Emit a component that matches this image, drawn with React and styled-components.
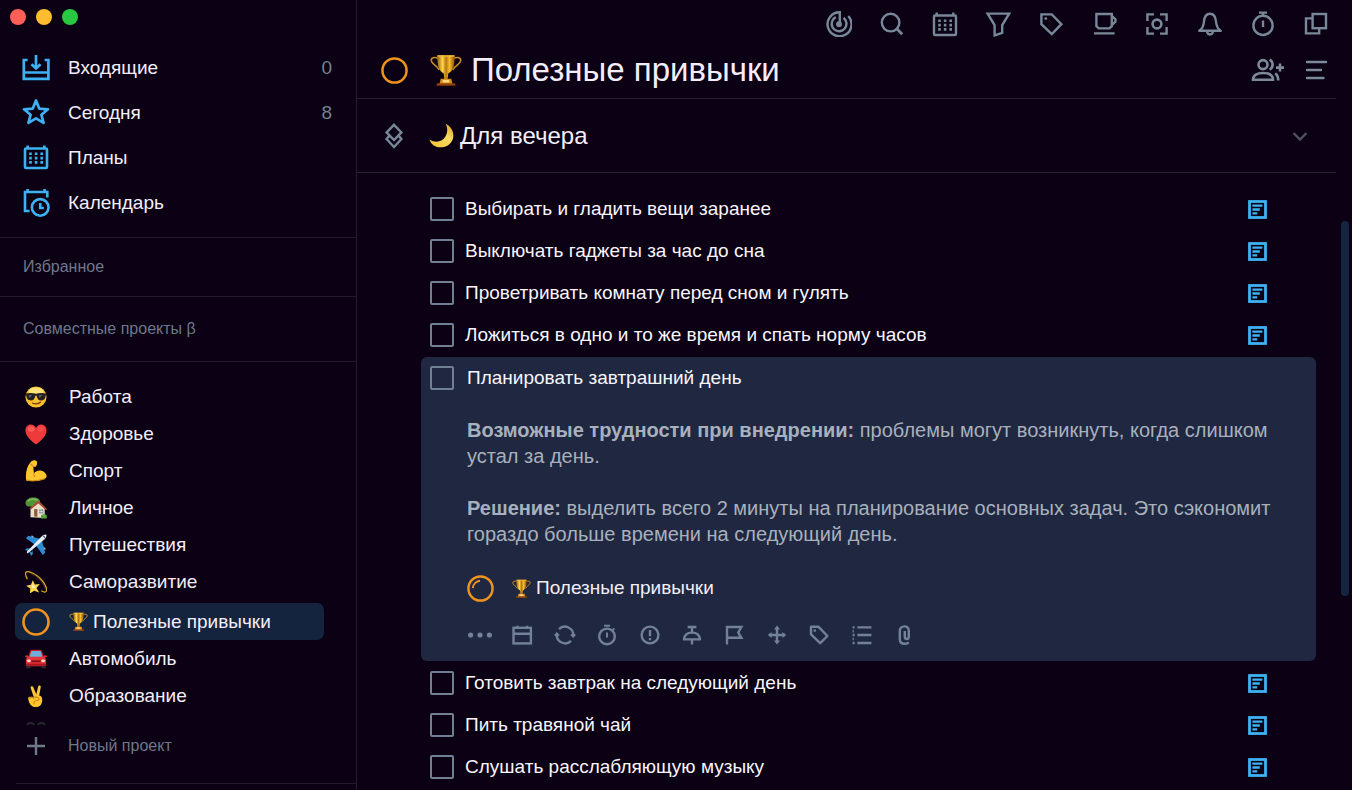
import React, { useState } from "react";
import styled, { createGlobalStyle } from "styled-components";

const GlobalStyle = createGlobalStyle`
  * {
    box-sizing: border-box;
  }

  body {
    margin: 0;
    background: #0b0014;
    color: #f3eefa;
    font-family: "Liberation Sans", Arial, sans-serif;
    font-size: 19px;
  }

  button {
    font: inherit;
    color: inherit;
    background: none;
    border: none;
    padding: 0;
    cursor: pointer;
  }

  svg {
    display: block;
    flex: none;
  }
`;

const Window = styled.div`
  display: flex;
  height: 100vh;
  overflow: hidden;
`;

const Sidebar = styled.aside`
  display: flex;
  flex-direction: column;
  flex: none;
  width: 357px;
  border-right: 1px solid #261d33;
`;

const WindowControls = styled.div`
  display: flex;
  gap: 10px;
  height: 45px;
  padding: 9px 10px;
`;

const Dot = styled.button`
  width: 16px;
  height: 16px;
  border-radius: 50%;
  && {
    background: ${({ color }) => color};
  }
`;

const Nav = styled.nav`
  padding-bottom: 12px;
  border-bottom: 1px solid #221a2d;
`;

const NavLink = styled.a`
  display: flex;
  align-items: center;
  gap: 18px;
  height: 45px;
  padding: 0 24px 0 22px;
  color: #f3eefa;
  text-decoration: none;

  svg {
    color: #3db2f2;
  }
`;

const Count = styled.span`
  margin-left: auto;
  color: #75808f;
`;

const SectionLabel = styled.h2`
  display: flex;
  align-items: center;
  height: ${({ $tall }) => ($tall ? "65px" : "59px")};
  margin: 0;
  padding-left: 23px;
  border-bottom: 1px solid #221a2d;
  color: #6f7889;
  font-size: 16px;
  font-weight: 400;
`;

const Projects = styled.nav`
  flex: 1;
  min-height: 0;
  overflow: hidden;
  padding-top: 16px;
`;

const ProjectLink = styled.a`
  display: flex;
  align-items: center;
  gap: 12px;
  height: 37px;
  margin: ${({ $selected }) => ($selected ? "3px" : "0")} 32px 0 15px;
  border-radius: 7px;
  background: ${({ $selected }) => ($selected ? "#14243f" : "transparent")};
  color: #f3eefa;
  text-decoration: none;
`;

const ProjectIcon = styled.span`
  display: flex;
  justify-content: center;
  width: 42px;
`;

const ProjectName = styled.span`
  display: flex;
  align-items: center;
  gap: 5px;
`;

const SidebarFooter = styled.div`
  flex: none;
  height: 64px;
`;

const NewProject = styled.button`
  display: flex;
  align-items: center;
  gap: 20px;
  width: 100%;
  height: 40px;
  && {
    padding-left: 24px;
    color: #6f7889;
    font-size: 16px;
  }
`;

const FooterLine = styled.hr`
  margin: 17px 0 0 16px;
  border: none;
  border-top: 1px solid #221a2d;
`;

const Main = styled.main`
  flex: 1;
  min-width: 0;
`;

const Toolbar = styled.div`
  display: flex;
  align-items: center;
  justify-content: flex-end;
  gap: 27px;
  height: 48px;
  padding-right: 7px;
  color: #788898;
`;

const Header = styled.header`
  display: flex;
  align-items: center;
  height: 51px;
  padding: 0 7px 6px 24px;
  border-bottom: 1px solid #2a2136;
`;

const Title = styled.h1`
  display: flex;
  align-items: center;
  gap: 9px;
  margin: 0 0 0 22px;
  font-size: 33px;
  line-height: 40px;
  font-weight: 400;
  white-space: nowrap;
`;

const HeaderActions = styled.div`
  display: flex;
  align-items: center;
  gap: 18px;
  margin-left: auto;
  color: #7c8a9a;
`;

const GroupHeader = styled.div`
  display: flex;
  align-items: center;
  height: 74px;
  padding: 0 24px 0 24px;
  border-bottom: 1px solid #2a2136;
  color: #788898;
`;

const GroupTitle = styled.h2`
  display: flex;
  align-items: center;
  gap: 6px;
  flex: 1;
  margin: 0 0 0 22px;
  color: #f3eefa;
  font-size: 24px;
  font-weight: 400;
`;

const TaskList = styled.ul`
  list-style: none;
  margin: 0;
  padding: 15px 20px 0 64px;
`;

const TaskItem = styled.li`
  display: flex;
  align-items: center;
  justify-content: space-between;
  height: 42px;
  padding: 0 49px 0 9px;
  color: #3db2f2;
`;

const TaskLabel = styled.label`
  display: flex;
  align-items: center;
  gap: ${({ $open }) => ($open ? "13px" : "11px")};
  height: 42px;
  color: #f8f5fc;
`;

const Checkbox = styled.input`
  appearance: none;
  width: 24px;
  height: 24px;
  margin: 0;
  border: 2px solid #728093;
  border-radius: 2px;
  cursor: pointer;

  &:checked {
    background: #728093;
  }
`;

const TaskCard = styled.li`
  margin: 1px 0;
  padding: 0 40px 14px 9px;
  border-radius: 6px;
  background: #1f2840;
`;

const CardBody = styled.div`
  margin-left: 37px;
`;

const Note = styled.p`
  margin: ${({ $first }) => ($first ? "18px" : "26px")} 0 0;
  color: #a9b0bd;
  font-size: 20px;
  line-height: 26px;
`;

const ProjectButton = styled.button`
  display: flex;
  align-items: center;
  gap: 18px;
  height: 28px;
  margin-top: 27px;
`;

const CardTools = styled.div`
  display: flex;
  justify-content: space-between;
  max-width: 448px;
  margin: 21px 0 0 1px;
  color: #72809a;
`;

const ScrollRail = styled.div`
  flex: none;
  width: 16px;
  padding: 221px 3px 0 5px;
`;

const ScrollThumb = styled.div`
  height: 375px;
  border-radius: 4px;
  background: #15243f;
`;

const Icon = ({ size = 26, width, stroke = 2.4, children }) => (
  <svg
    width={width || size}
    height={size}
    viewBox={`0 0 ${width || size} ${size}`}
    fill="none"
    stroke="currentColor"
    strokeWidth={stroke}
    aria-hidden="true"
  >
    {children}
  </svg>
);

/* Line icons */

const calendarShape = (
  <>
    <rect x="2" y="4.5" width="22" height="19.5" rx="1" />
    <path d="M4.7 1.5v3M21.3 1.5v3" />
    <path strokeWidth="2.6" strokeDasharray="2.6 3" d="M6.2 9.8H20M6.2 14.1H20M6.2 18.4H20" />
  </>
);

const navIcons = {
  inbox: (
    <Icon size={28} stroke={2.7}>
      <path d="M5.6 6H1.8v18.8h24.6V6h-3.8M1.8 18.5h24.6M14 1v13M9.5 10.2l4.5 4.3 4.5-4.3" />
    </Icon>
  ),
  today: (
    <Icon size={28} stroke={2.7}>
      <path
        strokeLinejoin="round"
        d="M14 1.5l3.200 8.100 8.800.7-6.600 5.500 2.200 8L14 19.300l-7.600 4.500 2.200-8L2 10.300l8.800-.7z"
      />
    </Icon>
  ),
  plans: (
    <Icon size={28} stroke={2.6}>
      <g transform="translate(1 0)">{calendarShape}</g>
    </Icon>
  ),
  calendar: (
    <Icon size={28} stroke={2.6}>
      <path d="M7.5 22H3V3h22.3v5.5M5.6 0v3M22.6 0v3" />
      <circle cx="18.2" cy="18.4" r="8.300" />
      <path d="M18.2 14v5h3.6" />
    </Icon>
  ),
};

const toolbarIcons = [
  {
    label: "Цели",
    shape: (
      <>
        <path d="M13.800 13V1.200A12 12 0 1 0 22.300 5" />
        <path d="M9.800 6.200A7.400 7.400 0 1 0 19.500 9.200L17.600 6.800" />
        <circle cx="13" cy="13.200" r="2.900" fill="currentColor" stroke="none" />
      </>
    ),
  },
  {
    label: "Поиск",
    shape: (
      <>
        <circle cx="11.6" cy="11.6" r="8.8" />
        <path d="M17.8 17.8l5.4 5.4" strokeWidth="2.8" />
      </>
    ),
  },
  { label: "Календарь", shape: calendarShape },
  {
    label: "Фильтр",
    shape: <path d="M2.6 2.6h21.6l-7 11.4v7.8l-7.6 2.6V14z" />,
  },
  {
    label: "Метки",
    shape: (
      <>
        <path d="M3.4 3.4h10.4l9.6 9.8-9.6 9.8L3.4 13.2z" />
        <circle cx="7.8" cy="7.6" r="1.4" fill="currentColor" stroke="none" />
      </>
    ),
  },
  {
    label: "Перерыв",
    shape: (
      <>
        <path d="M5.4 3h15.4v12.2l-2.4 2.2H7.8l-2.4-2.2z" />
        <path d="M20.8 5l3.6 3.2v2.6L20.8 14M3 22.4h20.6" />
      </>
    ),
  },
  {
    label: "Фокус",
    shape: (
      <>
        <path d="M10 3.4H3.4V10M16 3.4h6.6V10M10 22.6H3.4V16M16 22.6h6.6V16" />
        <circle cx="13" cy="13" r="4.4" strokeWidth="2.6" />
      </>
    ),
  },
  {
    label: "Уведомления",
    shape: (
      <>
        <path d="M2.2 19.7h21.6c-3.4-1.8-4.4-5-4.8-9.2-.4-4.8-2-7.8-6-7.8s-5.6 3-6 7.8c-.4 4.2-1.4 7.4-4.8 9.2z" strokeLinejoin="round" />
        <path d="M10 20c.4 4.6 5.6 4.6 6 0" />
      </>
    ),
  },
  {
    label: "Таймер",
    shape: (
      <>
        <circle cx="13" cy="14.4" r="9.6" />
        <path d="M9 1.6h8M13 1.6v3M13 9.5V16" />
      </>
    ),
  },
  {
    label: "Окна",
    shape: (
      <>
        <rect x="9.6" y="3" width="13.4" height="14.2" />
        <path d="M9.600 7.400H3v15h13.200v-5" />
      </>
    ),
  },
];

const cardTools = [
  {
    label: "Ещё",
    shape: (
      <g fill="currentColor" stroke="none">
        <circle cx="2.6" cy="12" r="2.6" />
        <circle cx="12" cy="12" r="2.6" />
        <circle cx="21.4" cy="12" r="2.6" />
      </g>
    ),
  },
  {
    label: "Дата",
    shape: (
      <>
        <rect x="3.5" y="4.8" width="17.4" height="15.6" />
        <path d="M3.5 10.8h17.4M7.4 2.8v2M17 2.8v2" />
      </>
    ),
  },
  {
    label: "Повтор",
    shape: (
      <>
        <path d="M6 6.2A8.300 8.300 0 0 1 20.200 12.800M18 17.800A8.300 8.300 0 0 1 3.800 11.200" />
        <path d="M18 11.400l2.200 2.200 2-2.200M1.800 12.600l2-2.200 2.200 2.200" strokeWidth="2" />
      </>
    ),
  },
  {
    label: "Время",
    shape: (
      <>
        <circle cx="12" cy="13.4" r="7.8" />
        <path d="M9 2.800h6M12 9.400v5.200M17.400 7.400l2-2" strokeWidth="2" />
      </>
    ),
  },
  {
    label: "Приоритет",
    shape: (
      <>
        <circle cx="12" cy="12" r="8.4" />
        <path d="M12 7v6.2M12 15v2.2" />
      </>
    ),
  },
  {
    label: "Закрепить",
    shape: (
      <>
        <path d="M7.6 4h8.8M12 4v5M12 17v4.6" />
        <path d="M4 16.400c.4-5 4-6.800 8-6.800s7.600 1.800 8 6.800z" strokeLinejoin="round" />
      </>
    ),
  },
  {
    label: "Флаг",
    shape: <path d="M5 21.6V4h14.4l-3.200 5.400 3.200 5.400H5" />,
  },
  {
    label: "Переместить",
    shape: (
      <>
        <path d="M12 4v16M4 12h16" />
        <g fill="currentColor" stroke="none">
          <path d="M12 2.600l3 3.800H9zM12 21.400l3-3.800H9zM2.800 12l3.800-3v6zM21.200 12l-3.800-3v6z" />
        </g>
      </>
    ),
  },
  {
    label: "Метка",
    shape: (
      <>
        <path d="M4 3.800h7.600l8.800 9.200-7.200 7.200L4 11.400z" strokeLinejoin="round" />
        <circle cx="7.8" cy="7.6" r="1.3" fill="currentColor" stroke="none" />
      </>
    ),
  },
  {
    label: "Подзадачи",
    shape: (
      <path d="M7.4 4.4h14M7.4 12h14M7.4 20h14M2.600 4.400h2M2.600 12h2M2.600 20h2M2.600 8.200h1.200M2.600 16h1.200" />
    ),
  },
  {
    label: "Вложение",
    shape: (
      <path d="M16.800 19.400c-1.400 1-2.800 1.400-4.200 1.400-3 0-4.800-2-4.800-4.800V8c0-2.800 1.800-4.600 4.600-4.600S16.800 5.200 16.800 8v5.600c0 1.600-.8 2.400-2 2.400s-2-.8-2-2.400V8" />
    ),
  },
];

const Ring = ({ size, shine }) => (
  <svg width={size} height={size} viewBox="0 0 28 28" fill="none" stroke="#f0931d" strokeWidth="2.6" aria-hidden="true">
    <circle cx="14" cy="14" r="12.5" />
    {shine && <path d="M6 13.500A8.500 8.500 0 0 1 13.500 6" strokeWidth="2" />}
  </svg>
);

const NoteIcon = () => (
  <Icon size={19} stroke={2.8}>
    <rect x="1.5" y="1.5" width="16" height="16" />
    <path d="M4.400 5.600h10M4.400 9.500h7.400M4.400 13.300h4.800" strokeWidth="2.300" />
  </Icon>
);

/* Emoji drawings */

const Emoji = ({ size = 22, children }) => (
  <svg width={size} height={size} viewBox="0 0 24 24" aria-hidden="true">
    {children}
  </svg>
);

const Trophy = ({ size }) => (
  <Emoji size={size}>
    <defs>
      <linearGradient id="cup">
        <stop offset="0" stopColor="#9a5a08" />
        <stop offset="0.3" stopColor="#ffd84a" />
        <stop offset="0.5" stopColor="#b87510" />
        <stop offset="0.7" stopColor="#f8bd2c" />
        <stop offset="1" stopColor="#8b4c07" />
      </linearGradient>
    </defs>
    <path d="M6.500 3.500C3 1.800.6 3 1 5.200c.4 2.600 4 3 6 6.800M17.500 3.500C21 1.800 23.400 3 23 5.200c-.4 2.600-4 3-6 6.800" fill="none" stroke="#c58d27" strokeWidth="1.2" />
    <path d="M5.500 1h13c.2 6.800-1 12-4.800 13.600L13.200 19h-2.400l-.5-4.400C6.500 13 5.300 7.800 5.500 1z" fill="url(#cup)" />
    <path d="M5.500 1h13v1h-13z" fill="#f2bd3b" />
    <path d="M8 18.500h8l1 4.500H7z" fill="#d18a1b" />
    <path d="M9.500 19.400h5v2h-5z" fill="#ffd878" />
    <path d="M5 22h14v1.800H5z" fill="#8e3f0c" />
  </Emoji>
);

const Moon = () => (
  <Emoji size={25}>
    <defs>
      <linearGradient id="moon" x1="0" y1="1" x2="1" y2="0">
        <stop offset="0" stopColor="#f4c22e" />
        <stop offset="0.6" stopColor="#f8dc66" />
        <stop offset="1" stopColor="#d99a1e" />
      </linearGradient>
    </defs>
    <path d="M16 .6c9 4.600 9.600 15.400 3 20.200C12.600 25.600 2.600 23.600.5 15.800c5.500 3.600 11.700 2.600 15-2.300 2.600-4 2.600-8.600.5-12.900z" fill="url(#moon)" />
  </Emoji>
);

const emojis = {
  work: (
    <Emoji>
      <circle cx="12" cy="12" r="11.5" fill="#fbc02d" />
      <ellipse cx="12" cy="6" rx="8" ry="4.5" fill="#ffe37a" />
      <path d="M.8 8.200c4-1 7.800-.8 11.200.3 3.400-1.100 7.200-1.300 11.200-.3l-.5 2c-.8 4.400-2 5.600-5 5.600-3.200 0-4.300-2-5-5.200h-1.400c-.7 3.200-1.800 5.200-5 5.200-3 0-4.200-1.200-5-5.600z" fill="#24201f" />
      <path d="M4 10l4-.4-3 3.400zM15 10l4-.4-3 3.400z" fill="#5b6167" />
      <path d="M8 18.600c3 1.500 6 1.200 9-1" fill="none" stroke="#7b3f0b" strokeWidth="1.4" strokeLinecap="round" />
    </Emoji>
  ),
  health: (
    <Emoji>
      <path d="M12 23.500C5 18 .5 13.200.5 7.800.5 4 3.200 1.500 6.400 1.500c2.600 0 4.600 1.500 5.600 4 1-2.500 3-4 5.600-4 3.200 0 5.900 2.500 5.900 6.300 0 5.400-4.500 10.200-11.500 15.700z" fill="#ee3a3a" />
      <ellipse cx="6.8" cy="6.5" rx="3.8" ry="3" fill="#fb5a56" />
      <ellipse cx="17.2" cy="6.5" rx="3.8" ry="3" fill="#f64a4a" />
    </Emoji>
  ),
  sport: (
    <Emoji>
      <path d="M6 2.500C8 .2 11.500-.2 12.600 1c1.200 1.500.6 5-1.200 6.300L9 7.500l.8 7c2.200-3 5.500-3.600 8.200-2.800 3.500 1 5.800 3.600 5.500 6.300-.2 1.600-1.500 2.300-3 2.800C15 22.800 7 24 1.200 22.300.3 14 2 7 6 2.500z" fill="#fcc62e" />
      <path d="M9.800 14.500c-.4 1.500 0 2.800 1 3.800M6.500 4.500l2.600 2.800M2 21.800c6 1.500 13 .8 19-1.200" fill="none" stroke="#d28d16" strokeWidth="1.2" strokeLinecap="round" />
    </Emoji>
  ),
  personal: (
    <Emoji>
      <path d="M9 10h3v9H9z" fill="#7b4a24" />
      <path d="M.6 7.500C-.2 3 5 .5 8.600.6 13 .2 17 2.500 16.500 6c-.5 3-4 3.500-6.500 4-3.500.8-8.800 1-9.400-2.500z" fill="#4f9536" />
      <path d="M3 4.500c3-2.500 8-3 11-.5" stroke="#7cba54" strokeWidth="1.8" fill="none" />
      <path d="M14 4.500l7.500 8V23L6 22V12z" fill="#efdfc6" />
      <path d="M14.500 3.500L24 13l-1 1.500-8.500-7.500L6 14l-1.200-1.200z" fill="#a84a37" />
      <path d="M10 13h3.500v8.600l-3.500-.3z" fill="#8a5b3d" />
      <path d="M15.500 13.500h4.500V18h-4.500z" fill="#6c91a8" />
      <path d="M17.700 13.500V18M15.500 15.700H20" stroke="#f5ebdd" strokeWidth=".7" />
      <path d="M17.500 20c2-1.500 5-1.500 6.300.5v3h-6.500z" fill="#58a53b" />
    </Emoji>
  ),
  travel: (
    <Emoji>
      <path d="M1 4.500L3.500 2l13.500 3.500-5 7zM19.500 23l2.500-2.500L18.500 7l-7 5zM0 17.500l2-2 7 .5-2 4zM6.500 24l2-2-.5-7-4 2z" fill="#2b8bd1" />
      <path d="M7 1.500l2.200.6v2l-2.200-.5zM22.500 17l-.6-2.200h-2l.5 2.200z" fill="#9fb3c6" />
      <path d="M23.200.8C22 .1 19.600 1 18 2.700L3.500 17.800c-1.200 1.300-1.800 2.400-1.300 2.900.5.500 1.700 0 3-1.300L21 6c1.800-1.600 3-4.300 2.200-5.200z" fill="#e4edf5" />
      <path d="M22.500 4L5 19.500l-2.300 1.200c.5.500 1.600 0 2.500-1.300L21 6z" fill="#9eb2c8" />
      <path d="M19.800 2l2.200 2" stroke="#33485c" strokeWidth="1.2" />
    </Emoji>
  ),
  growth: (
    <Emoji>
      <path d="M2.500 9C.3 4.500 0 1.500 1.500 1 5-.1 13 4 18 9.500c4.500 5 6.800 11 4.800 13-1 .9-3 .3-5-1" fill="none" stroke="#d9a72a" strokeWidth="1.4" />
      <path d="M6 2.600C12 4 20 12 22.500 20" fill="none" stroke="#8a6317" strokeWidth=".6" />
      <path d="M8.500 10l2.300 4.800 5.400-.6-3.600 4.300 2.800 4.900-5.400-1.900-4.600 3 .3-5.300-4.500-3 5.300-1.300z" fill="#fbd24a" />
      <path d="M8.500 13l1.300 3.500 2.500.2-2 2-3-.2z" fill="#fff0a8" />
    </Emoji>
  ),
  car: (
    <Emoji>
      <path d="M5.500 3.500C6 2.300 7 2 8.500 2h7c1.500 0 2.500.3 3 1.500L20.700 10H3.300z" fill="#c81f27" />
      <path d="M6.500 4.600C6.800 3.700 7.600 3.400 8.600 3.400h6.800c1 0 1.800.3 2.100 1.200L19.200 10H4.800z" fill="#70addd" />
      <path d="M0 8.500l3-.5.800 2H.5zM24 8.500l-3-.5-.8 2h3.300z" fill="#e33235" />
      <path d="M3 9.500h18c1.600 1 2 3 2 5.500v5H1v-5c0-2.500.4-4.500 2-5.500z" fill="#e73436" />
      <path d="M1.500 19h4.500v3H1.500zM18 19h4.500v3H18z" fill="#33292d" />
      <path d="M1 17h22v2.500H1z" fill="#aa1920" />
      <path d="M7 13.500h10v2H7z" fill="#7c151b" />
      <ellipse cx="4.2" cy="14" rx="2.2" ry="1.5" fill="#f9d9cf" />
      <ellipse cx="19.8" cy="14" rx="2.2" ry="1.5" fill="#f9d9cf" />
    </Emoji>
  ),
  education: (
    <Emoji>
      <path d="M9.500 13L6.200 3.200C5.800 1.400 8.300.6 9 2.300L12.300 10l2-8.200c.5-1.900 3.200-1.400 2.900.5l-1.700 9.200c2.500.5 3.300 2 3.300 4.500 0 5-2.300 8-7 8-4 0-6-2.300-7.500-5.500L3.500 15c-.5-2 1.700-3 3-1.700z" fill="#fcc62e" />
      <path d="M5 14.500c1.500-1.800 4-1.600 4.800.5M10 13.500c3-.8 5.500.2 5.300 2-.2 2-3.500 1-4.800 2.500-.6.800-.8 1.600-.8 2.500" fill="none" stroke="#c98413" strokeWidth="1.2" strokeLinecap="round" />
    </Emoji>
  ),
  more: (
    <Emoji>
      <path d="M2 3c2-2.600 6-2.600 8 0M14 3c2-2.600 6-2.600 8 0" fill="none" stroke="#2c2833" strokeWidth="2" />
    </Emoji>
  ),
};

const navItems = [
  { id: "inbox", label: "Входящие", count: 0 },
  { id: "today", label: "Сегодня", count: 8 },
  { id: "plans", label: "Планы" },
  { id: "calendar", label: "Календарь" },
];

const projects = [
  { id: "work", label: "Работа" },
  { id: "health", label: "Здоровье" },
  { id: "sport", label: "Спорт" },
  { id: "personal", label: "Личное" },
  { id: "travel", label: "Путешествия" },
  { id: "growth", label: "Саморазвитие" },
  { id: "habits", label: "Полезные привычки", selected: true },
  { id: "car", label: "Автомобиль" },
  { id: "education", label: "Образование" },
  { id: "more", label: "" },
];

const tasks = [
  { id: 1, title: "Выбирать и гладить вещи заранее" },
  { id: 2, title: "Выключать гаджеты за час до сна" },
  { id: 3, title: "Проветривать комнату перед сном и гулять" },
  { id: 4, title: "Ложиться в одно и то же время и спать норму часов" },
  { id: 5, title: "Планировать завтрашний день", open: true },
  { id: 6, title: "Готовить завтрак на следующий день" },
  { id: 7, title: "Пить травяной чай" },
  { id: 8, title: "Слушать расслабляющую музыку" },
];

const App = () => {
  const [done, setDone] = useState({});

  const toggle = (id) => setDone((prev) => ({ ...prev, [id]: !prev[id] }));

  const renderLabel = (task) => (
    <TaskLabel $open={task.open}>
      <Checkbox
        type="checkbox"
        checked={!!done[task.id]}
        onChange={() => toggle(task.id)}
      />
      {task.title}
    </TaskLabel>
  );

  return (
    <Window>
      <GlobalStyle />
      <Sidebar>
        <WindowControls>
          <Dot color="#ff5f57" aria-label="Закрыть" />
          <Dot color="#febc2e" aria-label="Свернуть" />
          <Dot color="#28c840" aria-label="Развернуть" />
        </WindowControls>

        <Nav>
          {navItems.map((item) => (
            <NavLink key={item.id} href={`#${item.id}`}>
              {navIcons[item.id]}
              {item.label}
              {item.count !== undefined && <Count>{item.count}</Count>}
            </NavLink>
          ))}
        </Nav>

        <SectionLabel>Избранное</SectionLabel>
        <SectionLabel $tall>Совместные проекты β</SectionLabel>

        <Projects>
          {projects.map((project) => (
            <ProjectLink
              key={project.id}
              href={`#${project.id}`}
              $selected={project.selected}
            >
              <ProjectIcon>
                {project.selected ? <Ring size={28} /> : emojis[project.id]}
              </ProjectIcon>
              <ProjectName>
                {project.selected && <Trophy size={19} />}
                {project.label}
              </ProjectName>
            </ProjectLink>
          ))}
        </Projects>

        <SidebarFooter>
          <NewProject>
            <Icon size={24} stroke={2.4}>
              <path d="M12 3v18M3 12h18" />
            </Icon>
            Новый проект
          </NewProject>
          <FooterLine />
        </SidebarFooter>
      </Sidebar>

      <Main>
        <Toolbar>
          {toolbarIcons.map((item) => (
            <button key={item.label} aria-label={item.label}>
              <Icon>{item.shape}</Icon>
            </button>
          ))}
        </Toolbar>

        <Header>
          <Ring size={27} />
          <Title>
            <Trophy size={32} />
            Полезные привычки
          </Title>
          <HeaderActions>
            <button aria-label="Участники">
              <Icon width={34} stroke={2.6}>
                <circle cx="12" cy="7.6" r="4.5" />
                <path d="M2 22.800c0-4.600 4-6.800 10-6.800s10 2.200 10 6.800z" />
                <path d="M18.600 2.600c4 2 4 8 0 10M24.200 16.400c2 1.400 3 3.400 3 7.200M29 6.600v8M25 10.600h8" />
              </Icon>
            </button>
            <button aria-label="Меню">
              <Icon stroke={2.4}>
                <path strokeLinecap="round" d="M4 5h19M4 13h14M4 21h16.500" />
              </Icon>
            </button>
          </HeaderActions>
        </Header>

        <GroupHeader>
          <Icon>
            <path d="M13 1.800l7.400 7.600-7.400 7.600-7.400-7.600zM8.500 12.400l-2.900 3.600 7.400 8 7.400-8-2.900-3.600" />
          </Icon>
          <GroupTitle>
            <Moon />
            Для вечера
          </GroupTitle>
          <button aria-label="Свернуть раздел">
            <Icon size={24}>
              <path d="M5.500 9l6.500 6.500L18.500 9" stroke="#52505f" />
            </Icon>
          </button>
        </GroupHeader>

        <TaskList>
          {tasks.map((task) =>
            task.open ? (
              <TaskCard key={task.id}>
                {renderLabel(task)}
                <CardBody>
                  <Note $first>
                    <strong>Возможные трудности при внедрении:</strong> проблемы
                    могут возникнуть, когда слишком устал за день.
                  </Note>
                  <Note>
                    <strong>Решение:</strong> выделить всего 2 минуты на
                    планирование основных задач. Это сэкономит гораздо больше
                    времени на следующий день.
                  </Note>
                  <ProjectButton>
                    <Ring size={27} shine />
                    <ProjectName>
                      <Trophy size={19} />
                      Полезные привычки
                    </ProjectName>
                  </ProjectButton>
                  <CardTools>
                    {cardTools.map((tool) => (
                      <button key={tool.label} aria-label={tool.label}>
                        <Icon size={24}>{tool.shape}</Icon>
                      </button>
                    ))}
                  </CardTools>
                </CardBody>
              </TaskCard>
            ) : (
              <TaskItem key={task.id}>
                {renderLabel(task)}
                <NoteIcon />
              </TaskItem>
            )
          )}
        </TaskList>
      </Main>

      <ScrollRail>
        <ScrollThumb />
      </ScrollRail>
    </Window>
  );
};

export default App;
